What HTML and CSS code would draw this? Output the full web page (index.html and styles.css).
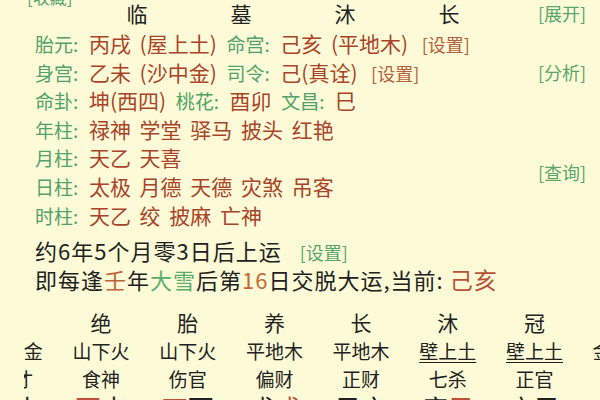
FILE: index.html
```html
<!DOCTYPE html>
<html lang="zh-CN">
<head>
<meta charset="utf-8">
<title>排盘</title>
<link rel="stylesheet" href="styles.css">
</head>
<body>
<div class="page">
  <div class="fav">[收藏]</div>
  <div class="info">
    <div class="hdr cell"><span>临</span><span>墓</span><span>沐</span><span>长</span></div>
    <div class="row cell"><span class="k">胎元:</span> <span class="v">丙戌 (屋上土)</span> <span class="k">命宫:</span> <span class="v">己亥 (平地木)</span> <span class="set">[设置]</span></div>
    <div class="row cell"><span class="k">身宫:</span> <span class="v">乙未 (沙中金)</span> <span class="k">司令:</span> <span class="v">己(真诠)</span> <span class="set">[设置]</span></div>
    <div class="row cell"><span class="k">命卦:</span> <span class="v">坤(西四)</span> <span class="k">桃花:</span> <span class="v">酉卯</span> <span class="k">文昌:</span> <span class="v">巳</span></div>
    <div class="row cell"><span class="k">年柱:</span> <span class="v">禄神 学堂 驿马 披头 红艳</span></div>
    <div class="row cell"><span class="k">月柱:</span> <span class="v">天乙 天喜</span></div>
    <div class="row cell"><span class="k">日柱:</span> <span class="v">太极 月德 天德 灾煞 吊客</span></div>
    <div class="row cell"><span class="k">时柱:</span> <span class="v">天乙 绞 披麻 亡神</span></div>
    <div class="lnk lnk-open">[展开]</div>
    <div class="lnk lnk-ana">[分析]</div>
    <div class="lnk lnk-query">[查询]</div>
  </div>
  <div class="yun">
    <div class="line">约6年5个月零3日后上运<span class="set-g">[设置]</span></div>
    <div class="line">即每逢<span class="c-ren">壬</span>年<span class="c-snow">大雪</span>后第<span class="c-num">16</span>日交脱大运,当前: <span class="c-cur">己亥</span></div>
  </div>
  <div class="tblwrap">
    <div class="tbl">
      <div class="th"></div><div class="th">绝</div><div class="th">胎</div><div class="th">养</div><div class="th">长</div><div class="th">沐</div><div class="th">冠</div><div class="th">临</div>
      <div class="ny">沙中金</div><div class="ny">山下火</div><div class="ny">山下火</div><div class="ny">平地木</div><div class="ny">平地木</div><div class="ny"><u>壁上土</u></div><div class="ny"><u>壁上土</u></div><div class="ny">金箔金</div>
      <div class="ss">偏才</div><div class="ss">食神</div><div class="ss">伤官</div><div class="ss">偏财</div><div class="ss">正财</div><div class="ss">七杀</div><div class="ss">正官</div><div class="ss">劫财</div>
      <div class="gz">乙未</div><div class="gz"><span class="fire">丙</span>申</div><div class="gz"><span class="fire">丁</span>酉</div><div class="gz">戊<span class="fire">戌</span></div><div class="gz">己亥</div><div class="gz">庚<span class="fire">子</span></div><div class="gz">辛丑</div><div class="gz">壬寅</div>
    </div>
  </div>
</div>
</body>
</html>
```
FILE: styles.css
```css
html, body {
  margin: 0;
  padding: 0;
  overflow: hidden;
  background: #fdfbd7;
}
body {
  font-family: "Noto Sans CJK SC", "Noto Sans", sans-serif;
  color: #252525;
  width: 600px;
  height: 400px;
}
.page {
  padding-left: 35px;
}
.fav {
  margin-top: -13px;
  margin-left: -8px;
  height: 20px;
  line-height: 20px;
  font-size: 17px;
  color: #5aa46e;
}
.info {
  margin-top: -10px;
  display: grid;
  grid-template-columns: 1fr 50px;
  grid-template-rows: 32px repeat(7, 28.6px);
  padding-right: 12px;
}
.cell {
  grid-column: 1;
  white-space: nowrap;
}
.hdr {
  padding-left: 50px;
  line-height: 32px;
  font-size: 21px;
  color: #222;
}
.hdr span {
  display: inline-block;
  width: 104px;
  text-align: center;
}
.row {
  line-height: 28.6px;
  height: 28.6px;
  word-spacing: 4px;
}
.k {
  font-size: 19px;
  color: #52a269;
  margin-right: 3px;
}
.v {
  font-size: 21px;
  color: #a9442b;
  margin-right: 2px;
}
.set {
  font-size: 18px;
  color: #b2603e;
  margin-left: 4px;
  word-spacing: 0;
}
.lnk {
  grid-column: 2;
  font-size: 18px;
  color: #5aa66d;
  display: flex;
  align-items: center;
  white-space: nowrap;
}
.lnk-open { grid-row: 1; }
.lnk-ana { grid-row: 3; }
.lnk-query { grid-row: 6 / span 2; }
.yun {
  margin-top: 7px;
  font-size: 22px;
  letter-spacing: 1px;
  color: #222;
}
.line {
  line-height: 29px;
  height: 29px;
  white-space: nowrap;
}
.set-g {
  font-size: 18px;
  letter-spacing: 0;
  color: #5aa66d;
  margin-left: 18px;
}
.c-ren { color: #c0613a; }
.c-snow { color: #5aae6c; }
.c-num { color: #c8683a; }
.c-cur { color: #b8513a; font-size: 23px; }
.tblwrap {
  margin-top: 14px;
  margin-left: -11px;
  overflow: hidden;
}
.tbl {
  margin-left: -53px;
  display: grid;
  grid-template-columns: repeat(8, 86.7px);
  grid-template-rows: repeat(4, 28.5px);
  text-align: center;
  white-space: nowrap;
  color: #222;
}
.th {
  font-size: 21px;
  line-height: 28.5px;
}
.ny {
  font-size: 19px;
  line-height: 28.5px;
}
.ny u {
  text-decoration-thickness: 1px;
  text-underline-offset: 3px;
}
.ss {
  font-size: 19px;
  line-height: 28.5px;
}
.gz {
  font-size: 26px;
  line-height: 28.5px;
}
.fire { color: #c0503a; }
```
